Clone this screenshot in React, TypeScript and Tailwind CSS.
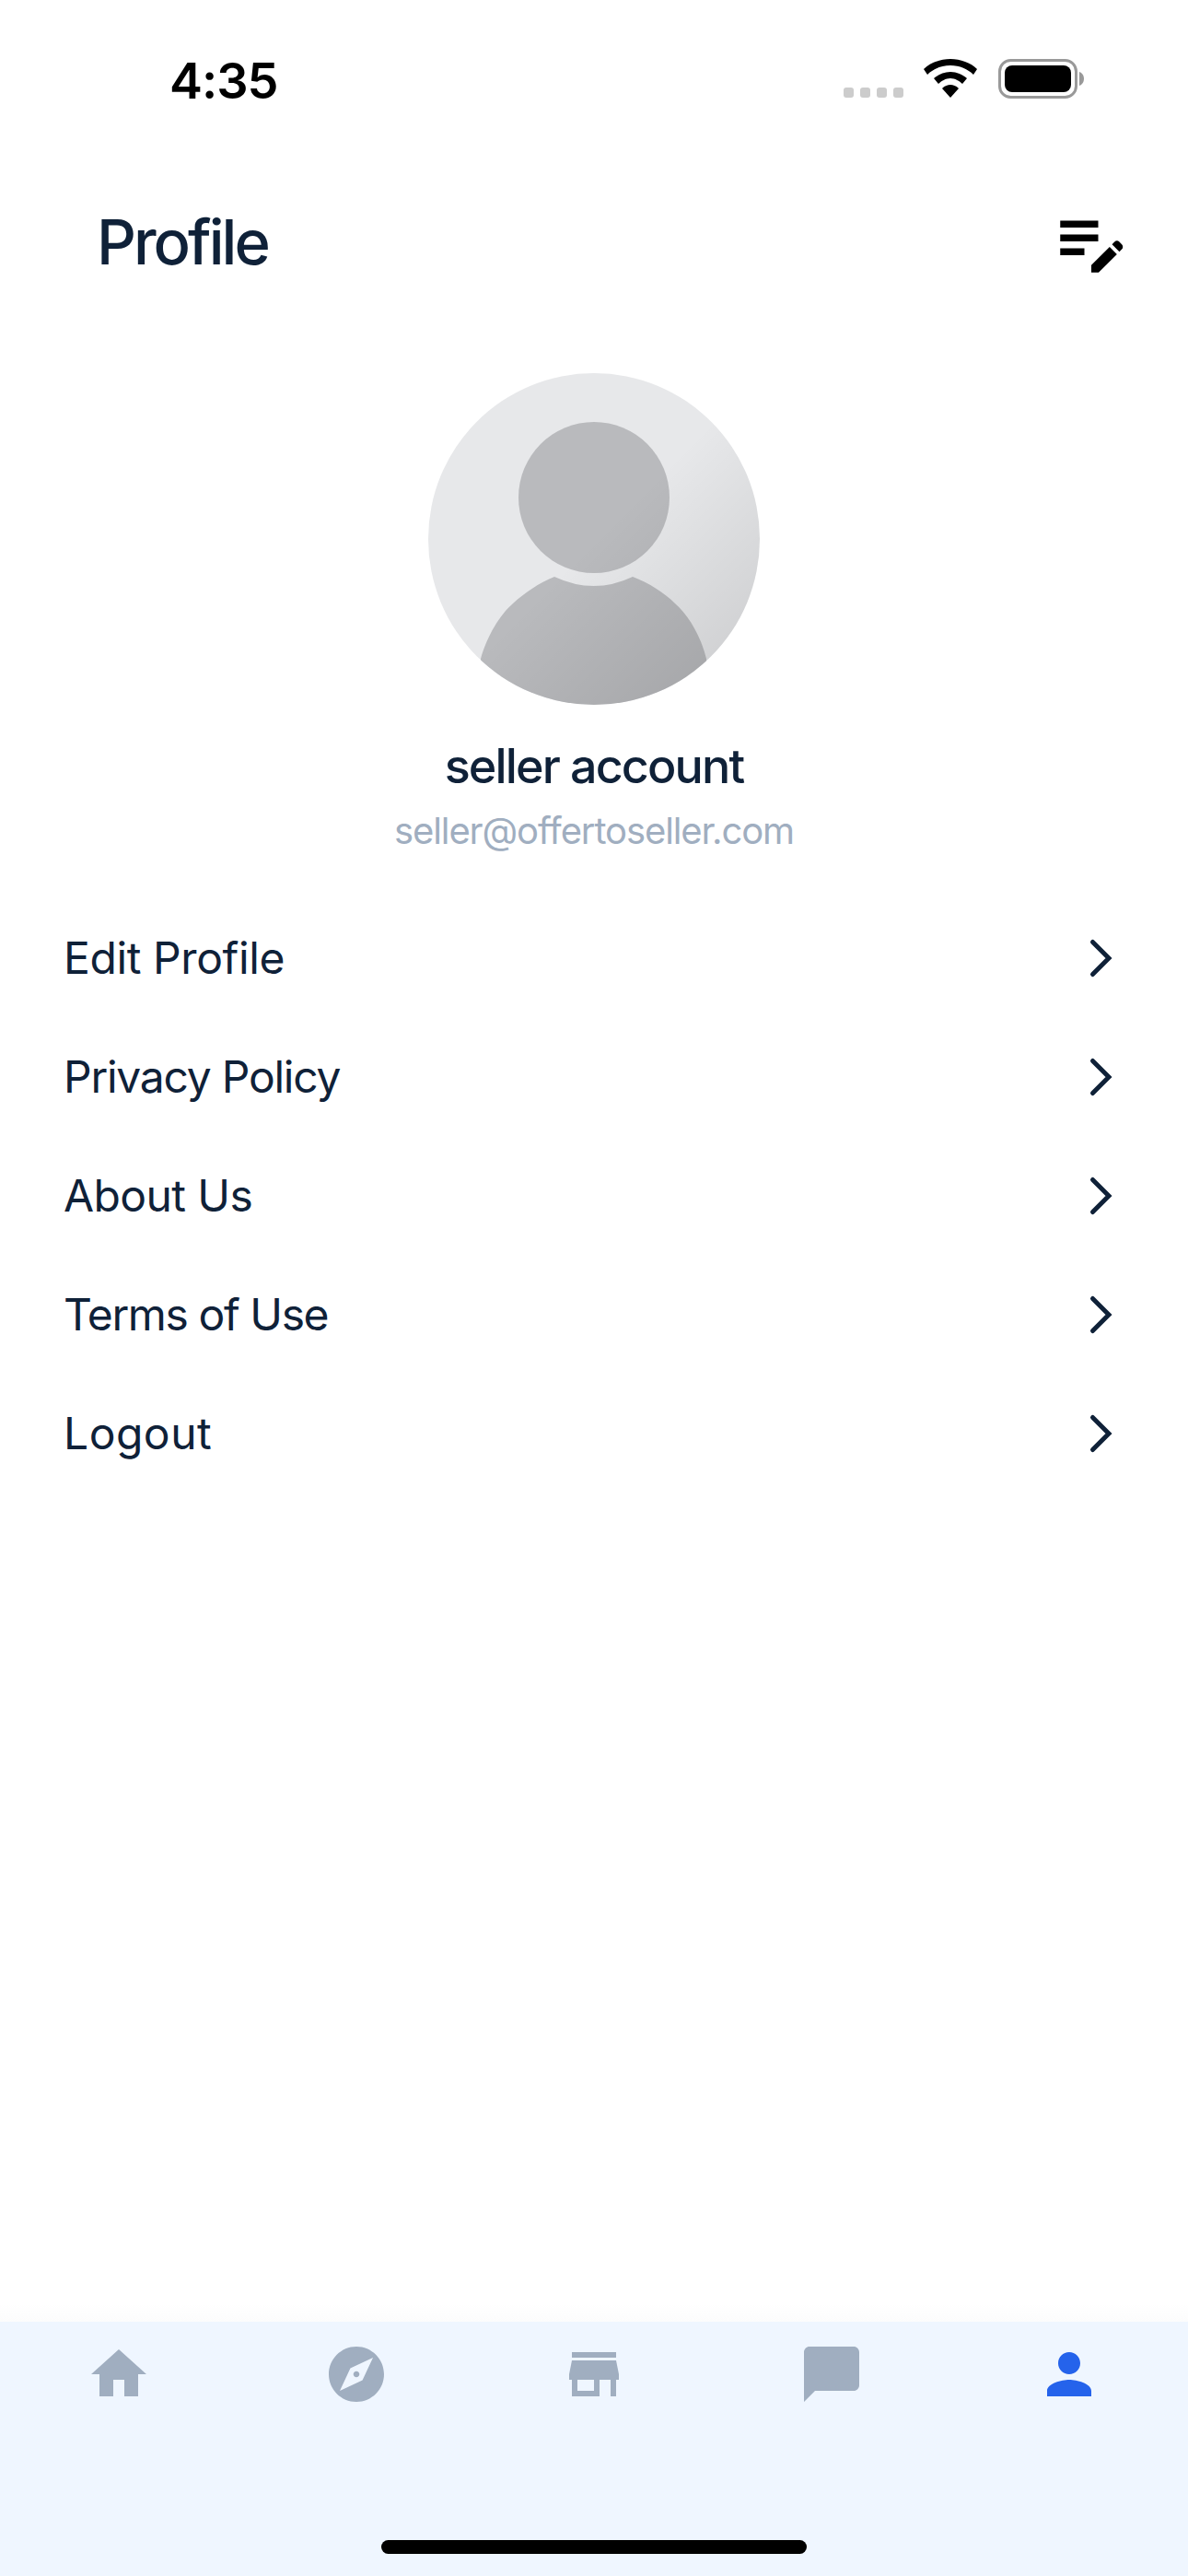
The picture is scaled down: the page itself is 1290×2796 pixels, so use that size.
import React from "react";
import { MdHome, MdExplore, MdStore, MdChatBubble, MdPerson, MdEditNote } from "react-icons/md";

const items = [
  { t: "Edit Profile", c: "tracking-[-0.4px]" },
  { t: "Privacy Policy", c: "tracking-[-1.25px]" },
  { t: "About Us", c: "tracking-[-0.6px]" },
  { t: "Terms of Use", c: "tracking-[-1.4px]" },
  { t: "Logout", c: "tracking-[0.5px]" },
];

function Avatar() {
  return (
    <svg width="360" height="360" viewBox="0 0 360 360">
      <defs>
        <clipPath id="c"><circle cx="180" cy="180" r="180" /></clipPath>
        <linearGradient id="g" x1="0" y1="0" x2="1" y2="1">
          <stop offset="0.5" stopColor="#000" stopOpacity="0" />
          <stop offset="1" stopColor="#000" stopOpacity="0.13" />
        </linearGradient>
      </defs>
      <g clipPath="url(#c)">
        <rect width="360" height="360" fill="#e7e8ea" />
        <circle cx="180" cy="135" r="82" fill="#b9babd" />
        <path d="M57 310C64 285 78 262 92 250C105 238 120 228 137 221Q180 241 222 221C240 228 256 238 268 250C282 262 296 285 302 310V360H57Z" fill="#b9babd" />
        <rect width="360" height="360" fill="url(#g)" />
      </g>
    </svg>
  );
}

export default function App() {
  return (
    <div className="w-[1290px] h-[2796px] bg-white flex flex-col font-['Inter',sans-serif]">
      <div className="h-[218px] flex items-start justify-between pt-[57px] pl-[184px] pr-[113px]">
        <span className="text-[54px] leading-[62px] font-semibold tracking-[-1px] text-black">4:35</span>
        <svg width="262" height="46" viewBox="0 0 262 46" className="mt-[6px]">
          <g fill="#cccccc">
            <rect x="1" y="32" width="11" height="11" rx="3" />
            <rect x="19" y="32" width="11" height="11" rx="3" />
            <rect x="37" y="32" width="11" height="11" rx="3" />
            <rect x="55" y="32" width="11" height="11" rx="3" />
          </g>
          <path d="M118 1C129 1 140 5 147 12L143 18C137 12 128 8 118 8C108 8 99 12 93 18L89 12C96 5 107 1 118 1Z" fill="#000" transform="translate(-1 0)" />
          <path d="M117 15C124 15 130 18 135 22L130 28C127 25 122 22 117 22C112 22 107 25 104 28L99 22C104 18 110 15 117 15Z" fill="#000" />
          <path d="M117 29C120 29 123 30 126 33L117 43L108 33C111 30 114 29 117 29Z" fill="#000" />
          <rect x="170.5" y="2.5" width="83" height="40" rx="12" fill="none" stroke="#999999" strokeWidth="3" />
          <rect x="176" y="8" width="72" height="29" rx="8" fill="#000" />
          <path d="M257 15C260 16 262 19 262 22.5C262 26 260 29 257 30Z" fill="#999999" />
        </svg>
      </div>

      <div className="h-[90px] flex items-center justify-between pl-[105px] pr-[60px]">
        <span className="text-[67px] leading-[90px] font-medium tracking-[-3px] text-[#0f2138]">Profile</span>
        <MdEditNote size={90} color="#000" className="mt-[-2px]" />
      </div>

      <div className="flex flex-col items-center mt-[97px]">
        <Avatar />
        <div className="mt-[35px] text-[52px] leading-[64px] font-medium tracking-[-1.85px] text-[#0f2138]">seller account</div>
        <div className="mt-[12px] text-[40px] leading-[52px] tracking-[-1.1px] text-[#a0aec0]">seller@offertoseller.com</div>
      </div>

      <div className="flex flex-col mt-[47px] pl-[69px] pr-[78px]">
        {items.map(({ t, c }) => (
          <div key={t} className="h-[129px] flex items-center justify-between">
            <span className={`text-[48px] leading-[60px] text-[#0f2138] ${c}`}>{t}</span>
            <svg width="32" height="48" viewBox="0 0 32 48" fill="none" stroke="#0f2138" strokeWidth="5" strokeLinecap="round" strokeLinejoin="miter">
              <path d="M6.5 6.5 L24 24 L6.5 41.5" />
            </svg>
          </div>
        ))}
      </div>

      <div className="flex-1" />
      <div className="h-[20px] bg-gradient-to-b from-white to-[#fcfcfc]" />

      <div className="h-[276px] bg-[#eff6ff] flex flex-col">
        <div className="grid grid-cols-5 justify-items-center pt-[21px]">
          <MdHome size={72} color="#a0aec0" />
          <MdExplore size={72} color="#a0aec0" />
          <MdStore size={72} color="#a0aec0" />
          <MdChatBubble size={72} color="#a0aec0" />
          <MdPerson size={72} color="#2563eb" />
        </div>
        <div className="mt-[144px] mx-auto w-[462px] h-[15px] rounded-full bg-black" />
      </div>
    </div>
  );
}
